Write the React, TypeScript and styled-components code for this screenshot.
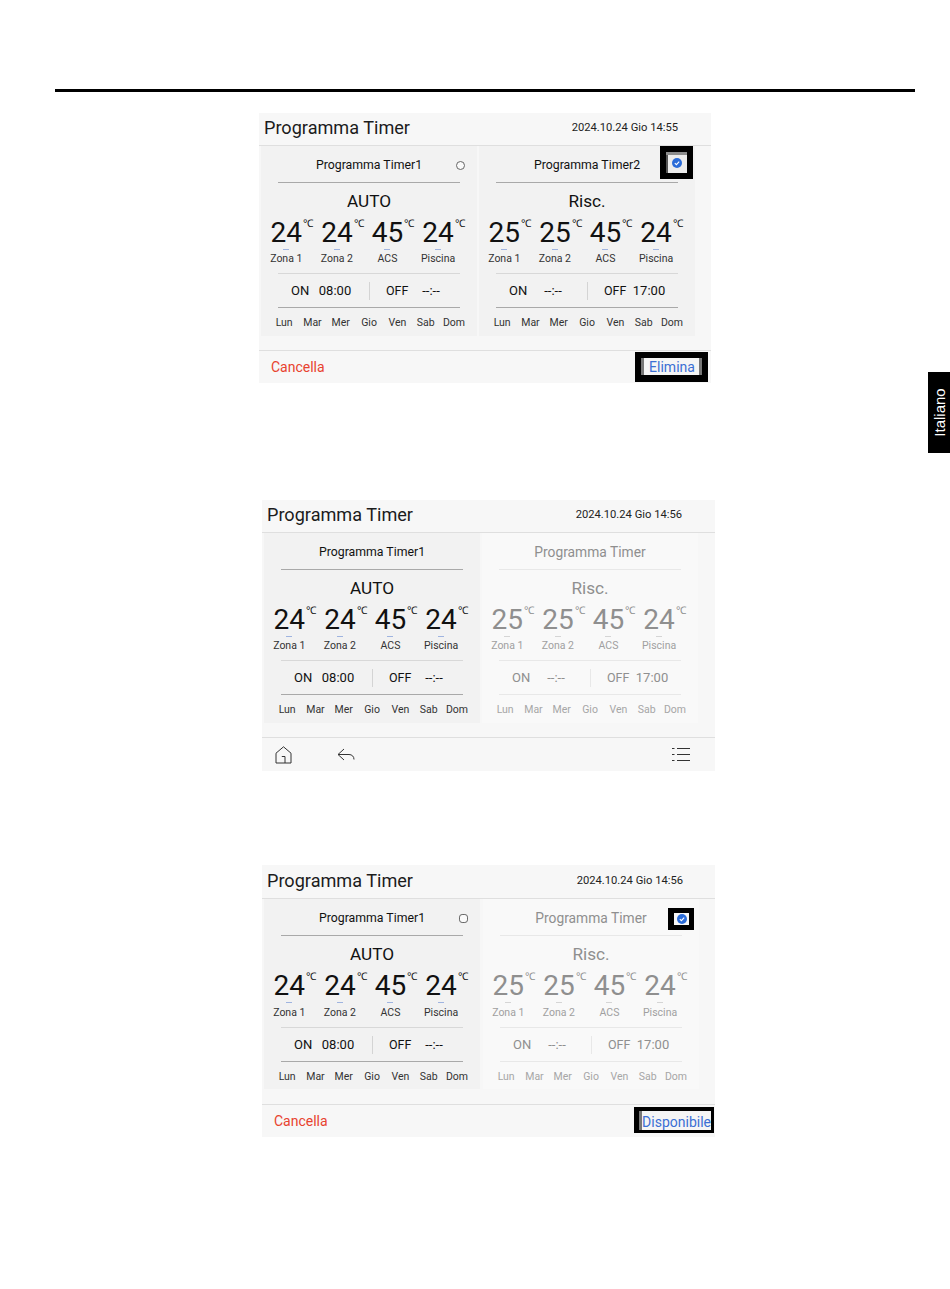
import React from "react";
import styled, { createGlobalStyle } from "styled-components";

const Global = createGlobalStyle`
  html, body { margin: 0; padding: 0; background: #fff; }
  body { font-family: Roboto, "Liberation Sans", sans-serif; color: #1a1a1a; }
`;

const Page = styled.div`
  position: relative;
  width: 950px;
  height: 1289px;
  overflow: hidden;
  padding-top: 89px;
  box-sizing: border-box;
  background: #fff;
`;

const TopRule = styled.div`
  height: 3px;
  width: 860px;
  margin-left: 55px;
  background: #000;
`;

const SideTab = styled.div`
  position: absolute;
  right: 0;
  top: 372px;
  width: 22px;
  height: 81px;
  background: #000;
  color: #fff;
  font: 15px "Liberation Sans", Arial, sans-serif;
  display: flex;
  align-items: center;
  justify-content: center;
  span { transform: rotate(-90deg); white-space: nowrap; }
`;

const Screen = styled.section<{ $left: number; $top: number; $height: number; $width: number }>`
  margin-left: ${(p) => p.$left}px;
  margin-top: ${(p) => p.$top}px;
  width: ${(p) => p.$width}px;
  height: ${(p) => p.$height}px;
  background: #f7f7f7;
  display: flex;
  flex-direction: column;
`;

const Header = styled.header<{ $h: number; $end?: number }>`
  height: ${(p) => p.$h}px;
  flex: none;
  box-sizing: border-box;
  padding: 0 ${(p) => p.$end ?? 33}px ${(p) => (p.$h === 34 ? 2 : 4)}px 5px;
  border-bottom: 1px solid #dfdfdf;
  display: flex;
  align-items: center;
  justify-content: space-between;
`;

const Title = styled.h1`
  margin: 0;
  font-size: 18.1px;
  font-weight: 400;
  color: #1c1c1c;
`;

const Clock = styled.span`
  font-size: 11.2px;
  color: #222;
`;

const Body = styled.div<{ $gap: number }>`
  flex: 1;
  display: flex;
  gap: ${(p) => p.$gap}px;
  padding-left: 2px;
`;

const Panel = styled.article<{ $dim?: boolean }>`
  position: relative;
  width: 216px;
  height: 190px;
  background: ${(p) => (p.$dim ? "#f9f9f9" : "#f2f2f2")};
  color: ${(p) => (p.$dim ? "#8f8f8f" : "#111")};
`;

const PanelTitle = styled.div<{ $dim?: boolean }>`
  height: 36px;
  box-sizing: border-box;
  padding-top: 2px;
  margin: 0 17px;
  display: flex;
  align-items: center;
  justify-content: center;
  font-size: ${(p) => (p.$dim ? 13.8 : 12.3)}px;
`;

const Rule = styled.div<{ $dim?: boolean; $soft?: boolean }>`
  height: 1px;
  margin: 0 17px;
  background: ${(p) => (p.$dim ? "#e8e8e8" : p.$soft ? "#d8d8d8" : "#a9a9a9")};
`;

const SoftRule = styled(Rule)`
  margin-top: 8px;
`;

const Mode = styled.div`
  height: 35px;
  line-height: 37px;
  text-align: center;
  font-size: 17.2px;
`;

const Temps = styled.div`
  display: grid;
  grid-template-columns: repeat(4, 50.6px);
`;

const TempCell = styled.div`
  display: flex;
  flex-direction: column;
  align-items: center;
`;

const TempValue = styled.div`
  height: 29px;
  line-height: 29px;
  font-size: 28px;
  white-space: nowrap;
`;

const Unit = styled.span`
  display: inline-block;
  width: 0;
  font-size: 10.5px;
  line-height: 10px;
  vertical-align: 15px;
  text-indent: 1px;
`;

const Dash = styled.div<{ $dim?: boolean }>`
  width: 6px;
  height: 1px;
  margin-top: 2px;
  background: ${(p) => (p.$dim ? "#d5d5d5" : "#9fb4e0")};
`;

const TempLabel = styled.div<{ $dim?: boolean; $loose?: boolean }>`
  height: 14px;
  line-height: 15px;
  margin-top: ${(p) => (p.$loose ? 2 : 1)}px;
  font-size: 10.5px;
  color: ${(p) => (p.$dim ? "#a0a0a0" : "#333")};
`;

const Schedule = styled.div`
  height: 33px;
  box-sizing: border-box;
  padding-left: 30px;
  display: flex;
  align-items: center;
  font-size: 13px;
`;

const OnLabel = styled.span`
  width: 24px;
`;

const Slot = styled.span`
  width: 40px;
  text-align: center;
`;

const Divider = styled.i<{ $dim?: boolean }>`
  width: 1px;
  height: 18px;
  margin: 0 16px 0 14px;
  background: ${(p) => (p.$dim ? "#e8e8e8" : "#d4d4d4")};
`;

const OffLabel = styled.span`
  width: 25px;
  font-size: 12.5px;
`;

const Days = styled.div<{ $dim?: boolean }>`
  display: grid;
  grid-template-columns: repeat(7, 28.3px);
  padding-left: 9px;
  height: 29px;
  line-height: 29px;
  text-align: center;
  font-size: 10.5px;
  color: ${(p) => (p.$dim ? "#a6a6a6" : "#333")};
`;

const Radio = styled.span<{ $square?: boolean }>`
  position: absolute;
  left: 195px;
  top: 15px;
  width: 9px;
  height: 9px;
  box-sizing: border-box;
  border: 1px solid #666;
  border-radius: ${(p) => (p.$square ? "35%" : "50%")};
  background: #fafafa;
`;

const MarkFrame = styled.span<{ $x: number; $y: number; $w: number; $h: number; $soft?: boolean }>`
  position: absolute;
  left: ${(p) => p.$x}px;
  top: ${(p) => p.$y}px;
  width: ${(p) => p.$w}px;
  height: ${(p) => p.$h}px;
  box-sizing: border-box;
  border: solid #000;
  border-width: ${(p) => (p.$soft ? "5px 5px 5px 6px" : "6px")};
  background: ${(p) => (p.$soft ? "#f7f7f7" : "#ececec")};
  display: flex;
  align-items: center;
  justify-content: center;
  ${(p) => !p.$soft && "box-shadow: inset 0 3px 0 #8c8c8c, inset 2px 0 0 #555;"}
`;

const CheckDot = styled.svg`
  display: block;
  width: 10px;
  height: 10px;
`;

const Footer = styled.footer<{ $h: number }>`
  margin-top: auto;
  height: ${(p) => p.$h}px;
  flex: none;
  box-sizing: border-box;
  border-top: 1px solid #dfdfdf;
  padding: 0 3px 0 12px;
  display: flex;
  align-items: center;
  justify-content: space-between;
`;

const Cancel = styled.span`
  font-size: 14px;
  color: #e8432f;
`;

const Action = styled.span<{ $wide?: boolean }>`
  box-sizing: border-box;
  height: ${(p) => (p.$wide ? 26 : 30)}px;
  width: ${(p) => (p.$wide ? 80 : 73)}px;
  margin: ${(p) => (p.$wide ? "-2px -2px 0 0" : "0")};
  padding-top: ${(p) => (p.$wide ? 2 : 0)}px;
  padding-left: ${(p) => (p.$wide ? 0 : 1)}px;
  border: solid #000;
  border-width: ${(p) => (p.$wide ? "4px 3px 3px 5px" : "6px 6px 7px 6px")};
  background: #f5f5f5;
  box-shadow: inset 3px 0 0 #777, inset ${(p) => (p.$wide ? "0" : "-3px")} 0 0 #777;
  color: #3b6fd4;
  font-size: 14px;
  line-height: 1;
  display: flex;
  align-items: center;
  justify-content: ${(p) => (p.$wide ? "flex-end" : "center")};
`;

const IconRow = styled.div`
  display: flex;
  align-items: center;
  width: 100%;
  padding-left: 1px;
  svg { display: block; flex: none; }
  svg:nth-child(2) { margin-left: 45px; }
  svg:last-child { margin-left: auto; margin-right: 22px; }
`;

const temps1 = [
  ["24", "Zona 1"],
  ["24", "Zona 2"],
  ["45", "ACS"],
  ["24", "Piscina"],
];
const temps2 = [
  ["25", "Zona 1"],
  ["25", "Zona 2"],
  ["45", "ACS"],
  ["24", "Piscina"],
];
const days = ["Lun", "Mar", "Mer", "Gio", "Ven", "Sab", "Dom"];

type CardProps = {
  title: string;
  mode: string;
  temps: string[][];
  on: string;
  off: string;
  dim?: boolean;
  loose?: boolean;
  children?: React.ReactNode;
};

function Card({ title, mode, temps, on, off, dim, loose, children }: CardProps) {
  return (
    <Panel $dim={dim}>
      <PanelTitle $dim={dim}>{title}</PanelTitle>
      {children}
      <Rule $dim={dim} />
      <Mode>{mode}</Mode>
      <Temps>
        {temps.map(([v, l], i) => (
          <TempCell key={i}>
            <TempValue>
              {v}
              <Unit>℃</Unit>
            </TempValue>
            <Dash $dim={dim} />
            <TempLabel $dim={dim} $loose={loose}>{l}</TempLabel>
          </TempCell>
        ))}
      </Temps>
      <SoftRule $dim={dim} $soft />
      <Schedule>
        <OnLabel>ON</OnLabel>
        <Slot>{on}</Slot>
        <Divider $dim={dim} />
        <OffLabel>OFF</OffLabel>
        <Slot>{off}</Slot>
      </Schedule>
      <Rule $dim={dim} />
      <Days $dim={dim}>
        {days.map((d) => (
          <span key={d}>{d}</span>
        ))}
      </Days>
    </Panel>
  );
}

const Check = () => (
  <CheckDot viewBox="0 0 10 10">
    <circle cx="5" cy="5" r="5" fill="#2a6bd8" />
    <path d="M2.8 5.1 4.4 6.6 7.2 3.6" fill="none" stroke="#fff" strokeWidth="1.1" />
  </CheckDot>
);

const HomeIcon = () => (
  <svg width="17" height="18" viewBox="0 0 17 18" fill="none" stroke="#333" strokeWidth="1">
    <path d="M1 7.2 8.5 .8 16 7.2V17H1Z" />
    <path d="M6.8 10.5H10V17" />
  </svg>
);

const BackIcon = () => (
  <svg width="18" height="14" viewBox="0 0 18 14" fill="none" stroke="#333" strokeWidth="1">
    <path d="M7 1 1 6.5 7 12" />
    <path d="M1 6.5H12C15 6.5 17 8.5 17 11.5" />
  </svg>
);

const ListIcon = () => (
  <svg width="18" height="15" viewBox="0 0 18 15" fill="none" stroke="#333" strokeWidth="1">
    <path d="M5 1.5H18M5 7.5H18M5 13.5H18" />
    <path d="M0 1.5H2.5M0 7.5H2.5M0 13.5H2.5" />
  </svg>
);

export default function App() {
  return (
    <Page>
      <Global />
      <TopRule />

      <Screen $left={259} $top={21} $height={270} $width={452}>
        <Header $h={33}>
          <Title>Programma Timer</Title>
          <Clock>2024.10.24 Gio 14:55</Clock>
        </Header>
        <Body $gap={2}>
          <Card title="Programma Timer1" mode="AUTO" temps={temps1} on="08:00" off="--:--">
            <Radio />
          </Card>
          <Card title="Programma Timer2" mode="Risc." temps={temps2} on="--:--" off="17:00">
            <MarkFrame $x={181} $y={0} $w={33} $h={33}>
              <Check />
            </MarkFrame>
          </Card>
        </Body>
        <Footer $h={33}>
          <Cancel>Cancella</Cancel>
          <Action>Elimina</Action>
        </Footer>
      </Screen>

      <Screen $left={262} $top={117} $height={271} $width={453}>
        <Header $h={33}>
          <Title>Programma Timer</Title>
          <Clock>2024.10.24 Gio 14:56</Clock>
        </Header>
        <Body $gap={2}>
          <Card title="Programma Timer1" mode="AUTO" temps={temps1} on="08:00" off="--:--" />
          <Card dim title="Programma Timer" mode="Risc." temps={temps2} on="--:--" off="17:00" />
        </Body>
        <Footer $h={34}>
          <IconRow>
            <HomeIcon />
            <BackIcon />
            <ListIcon />
          </IconRow>
        </Footer>
      </Screen>

      <Screen $left={262} $top={94} $height={272} $width={453}>
        <Header $h={34} $end={32}>
          <Title>Programma Timer</Title>
          <Clock>2024.10.24 Gio 14:56</Clock>
        </Header>
        <Body $gap={3}>
          <Card loose title="Programma Timer1" mode="AUTO" temps={temps1} on="08:00" off="--:--">
            <Radio $square />
          </Card>
          <Card loose dim title="Programma Timer" mode="Risc." temps={temps2} on="--:--" off="17:00">
            <MarkFrame $x={185} $y={9} $w={26} $h={22} $soft>
              <Check />
            </MarkFrame>
          </Card>
        </Body>
        <Footer $h={33}>
          <Cancel>Cancella</Cancel>
          <Action $wide>Disponibile</Action>
        </Footer>
      </Screen>

      <SideTab>
        <span>Italiano</span>
      </SideTab>
    </Page>
  );
}
